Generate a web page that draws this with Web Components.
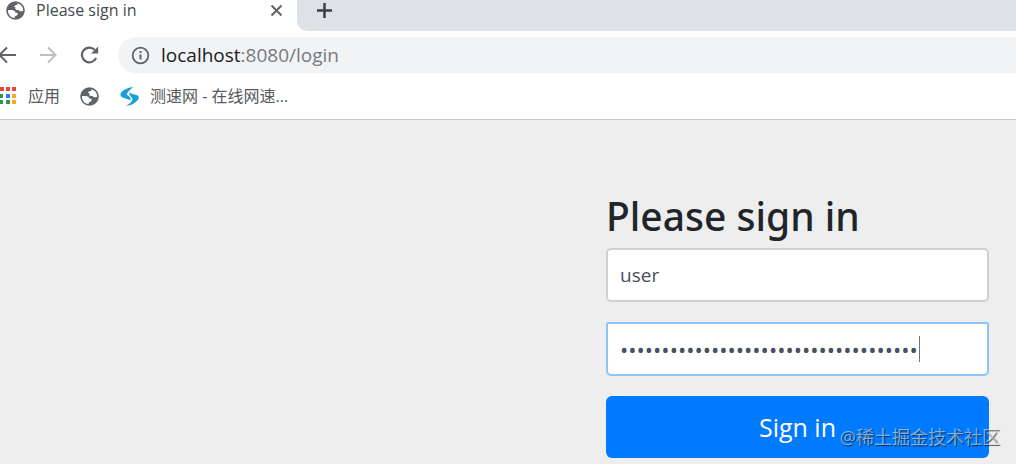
<!DOCTYPE html>
<html lang="zh-CN">
<head>
<meta charset="utf-8">
<title>Please sign in</title>
<style>
html,body{margin:0;height:100%}
body{font-family:"Open Sans","Noto Sans CJK SC",sans-serif;background:#eee;color:#212529;overflow:hidden}
</style>
</head>
<body>
<browser-window>
  <tab-strip slot="tabs" label="Please sign in"></tab-strip>
  <address-bar slot="address"><span slot="host">localhost</span>:8080/login</address-bar>
  <bookmarks-bar slot="bookmarks"></bookmarks-bar>
  <sign-in-form></sign-in-form>
  <water-mark slot="mark">@稀土掘金技术社区</water-mark>
</browser-window>
<script>
const define = (name, html) => {
  const t = document.createElement('template');
  t.innerHTML = html;
  customElements.define(name, class extends HTMLElement {
    constructor() {
      super();
      this.attachShadow({mode: 'open'}).append(t.content.cloneNode(true));
    }
    connectedCallback() {
      const label = this.shadowRoot.querySelector('[data-label]');
      if (label) label.textContent = this.getAttribute('label');
    }
  });
};

define('globe-icon', `
<style>:host{display:block;width:19px;height:19px;flex:none}svg{display:block;width:100%;height:100%}</style>
<svg viewBox="0 0 19 19" aria-hidden="true"><circle cx="9.500" cy="9.500" r="9.300" fill="#5f6368"/>
<path d="M11.300 2.200C15 3 17.300 6 17.200 9.700L16 10.300 13.700 10.200 12.400 8.900 10.700 8.900 9.300 7.900 9.400 6.300 7.800 5.700 9.300 4.300 11.300 3.900Z" fill="#fff"/>
<path d="M1.900 9.100L6.300 9 8.700 10 9.300 11.400 11.800 12.100 11.300 14.300 9 15.300 8.500 17.100C4.500 16.700 1.800 13.300 1.900 9.100Z" fill="#fff"/></svg>`);

define('browser-window', `
<style>
:host{display:flex;flex-direction:column;min-height:100vh;position:relative}
header{background:#fff;border-bottom:1px solid #c9c9c9;flex:none}
main{flex:1;display:flex;justify-content:flex-end;padding:72px 27px 0}
</style>
<header><slot name="tabs"></slot><slot name="address"></slot><slot name="bookmarks"></slot></header>
<main><slot></slot></main><slot name="mark"></slot>`);

define('tab-strip', `
<style>
:host{display:flex;height:31px;background:#fff;color:#45494d}
.tab{display:flex;align-items:center;width:297px;height:20px;box-sizing:border-box;padding:0 14px 0 6px;font-size:16px;line-height:20px}
.tab span{margin-left:11px;flex:1}
button{border:0;background:none;padding:0;display:block}
svg{display:block}
.rest{flex:1;background:#dee1e6;border-bottom-left-radius:10px;padding:2px 19px 0}
</style>
<div class="tab"><globe-icon></globe-icon><span data-label></span>
<button aria-label="Close tab"><svg width="13" height="13" viewBox="0 0 13 13"><path d="M1.500 1.500l10 10m0-10l-10 10" stroke="#5f6368" stroke-width="2"/></svg></button></div>
<div class="rest"><button aria-label="New tab"><svg width="17" height="17" viewBox="0 0 17 17"><path d="M8.500 1v15M1 8.500h15" stroke="#3c4043" stroke-width="2.500"/></svg></button></div>`);

define('address-bar', `
<style>
:host{display:flex;align-items:center;height:48px}
button{border:0;background:none;padding:0;display:block;flex:none}
svg{display:block}
nav{display:flex;align-items:center;gap:23px;width:118px;flex:none}
.box{flex:1;height:36px;border-radius:18px 0 0 18px;background:#f1f3f4;display:flex;align-items:center;gap:11px;padding-left:13px;font-size:19px;line-height:26px;color:#777b80}
::slotted([slot=host]){color:#202124}
</style>
<nav aria-label="Navigation">
<button aria-label="Back"><svg width="17" height="18" viewBox="0 0 17 18" fill="none" stroke="#5f6368" stroke-width="2"><path d="M16 9H0M7 1.500L-.500 9l7.500 7.500"/></svg></button>
<button aria-label="Forward"><svg width="17" height="18" viewBox="0 0 17 18" fill="none" stroke="#bcbec1" stroke-width="2"><path d="M0 9h15M8 1.500L15.500 9 8 16.500"/></svg></button>
<button aria-label="Reload"><svg width="19" height="18" viewBox="0 0 19 18"><path d="M16.100 12A7.400 7.400 0 1 1 14.700 3.800" fill="none" stroke="#5f6368" stroke-width="2.200"/><path d="M18.200 .500V7.500H11z" fill="#5f6368"/></svg></button>
</nav>
<div class="box"><svg width="19" height="19" viewBox="0 0 19 19"><circle cx="9.500" cy="9.500" r="7.800" fill="none" stroke="#5f6368" stroke-width="1.800"/><path d="M9.500 8.500v5M9.500 5v2" stroke="#5f6368" stroke-width="2"/></svg><div><slot name="host"></slot><slot></slot></div></div>`);

define('bookmarks-bar', `
<style>
:host{display:flex;align-items:center;height:40px;font-size:16px;line-height:22px}
a{display:flex;align-items:center;color:#55585c;text-decoration:none;padding-bottom:6px}
svg{display:block;flex:none}
.apps,.site{gap:11px}.site,.globe{margin-left:20px}
</style>
<a class="apps" href="#apps"><svg width="17" height="18" viewBox="0 0 17 18"><path d="M0 0h4v4H0zM6 0h4v4H6zM12 0h4v4h-4z" fill="#e8433a"/><path d="M0 7h3v4H0z" fill="#249a52"/><path d="M6 7h4v4H6z" fill="#3579e8"/><path d="M12 7h4v4h-4zM12 13h4v4h-4z" fill="#f5ad18"/><path d="M0 13h3v4H0zM6 13h4v4H6z" fill="#249a52"/></svg>应用</a>
<a class="globe" href="#globe" aria-label="Bookmark"><globe-icon></globe-icon></a>
<a class="site" href="#speed"><svg width="20" height="19" viewBox="0 0 20 19" fill="#1c9ed9"><path d="M14 0C9 .500 3 3.500 1.500 6.700c-.600 2.500 1 3.300 3.500 4.200l6.500 2.300c.300-2.200-.500-3.700-2.500-4.500L8 7.700C7.500 6 10.500 3.500 14 0Z"/><path d="M10 5c2 1.800 5 2.300 7.500 3 3.200 1 2.500 3.800.800 5.500-2.800 2.800-5.300 4.800-11.300 5.300 3.500-2 6-4 6.500-6.300C13.800 10.500 10.500 10 10 5Z"/></svg>测速网 - 在线网速...</a>`);

define('sign-in-form', `
<style>
:host{display:block;flex:0 1 383px;min-width:0}
form{display:flex;flex-direction:column}
h1{margin:0 0 8px;font:500 39px/48px "Noto Sans",sans-serif}
input{box-sizing:border-box;width:100%;height:54px;display:block;margin:0 0 20px;padding:0 12px;border:2px solid #ced0d2;border-radius:5px;background:#fff;color:#495057;font:19px/30px "Open Sans",sans-serif;outline:0}
.password{position:relative}
.password input{border-color:#8fc4fb;border-radius:2px 2px 5px 5px;font-size:22px}
.caret{position:absolute;left:313px;top:14px;width:1px;height:26px;background:#6c757d}
button{height:62px;border:0;border-radius:6px;background:#007bff;color:#fff;font:25px/36px "Open Sans",sans-serif}
</style>
<form><h1>Please sign in</h1>
<input type="text" aria-label="Username" value="user">
<div class="password"><input type="password" aria-label="Password" value="000000000000000000000000000000000000"><span class="caret"></span></div>
<button type="button">Sign in</button></form>`);

define('water-mark', `
<style>:host{position:absolute;right:16px;bottom:14px;font-size:18px;line-height:26px;color:rgba(255,255,255,.5);text-shadow:1px 1px 1px rgba(0,0,0,.65);pointer-events:none}</style><slot></slot>`);
</script>
</body>
</html>
